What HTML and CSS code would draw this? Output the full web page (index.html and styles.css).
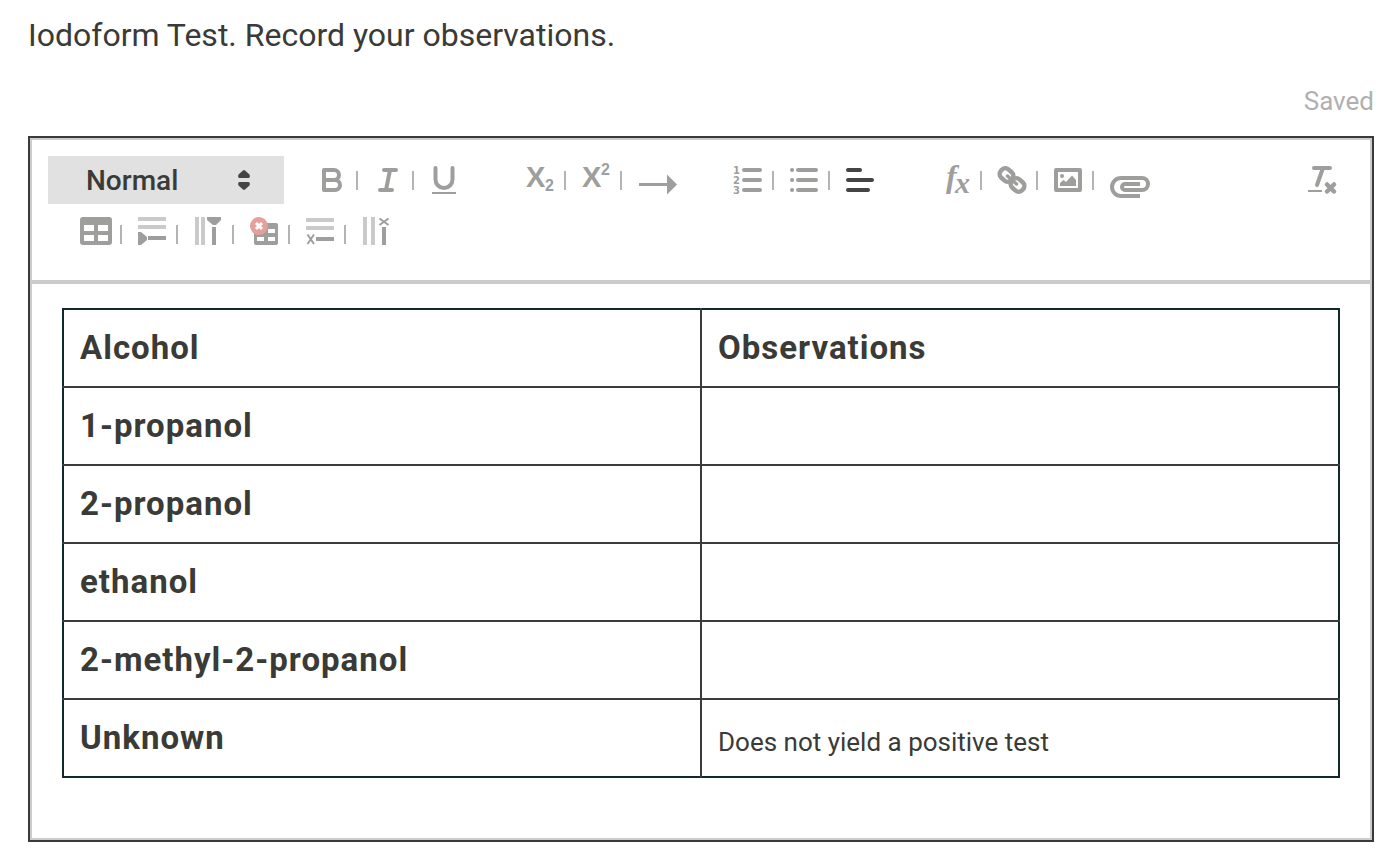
FILE: index.html
```html
<!DOCTYPE html>
<html lang="en">
<head>
    <meta charset="UTF-8">
    <meta name="viewport" content="width=device-width, initial-scale=1.0">
    <title>Iodoform Test</title>
    <link rel="stylesheet" href="styles.css">
</head>
<body>
    <main class="question">
        <p class="prompt">Iodoform Test. Record your observations.</p>
        <p class="status">Saved</p>

        <div class="editor">
            <div class="toolbar">
                <div class="toolbar-row">
                    <div class="format-picker">
                        <select class="format-select" aria-label="Text style">
                            <option selected>Normal</option>
                            <option>Heading 1</option>
                            <option>Heading 2</option>
                        </select>
                        <svg class="picker-arrows" width="12" height="20" viewBox="0 0 12 20"><path d="M5 .4Q6 -.2 7 .4L11.500 4.500Q12.500 8 10.500 8H1.500Q-.500 8 .500 4.500ZM5 19.600Q6 20.200 7 19.600L11.500 15.500Q12.500 12 10.500 12H1.500Q-.500 12 .500 15.500Z"/></svg>
                    </div>
                    <div class="group">
                        <button class="tool" type="button" aria-label="Bold"><svg viewBox="0 0 52 48"><path class="stroke" d="M20 14H30A4.500 4.500 0 0 1 30 24H20ZM20 24H31A5 5 0 0 1 31 34H20Z" stroke-width="4"/></svg></button>
                        <button class="tool" type="button" aria-label="Italic"><svg viewBox="0 0 52 48"><path class="stroke" d="M24 14H36M20 34H32M30 14L26 34" stroke-width="4"/></svg></button>
                        <button class="tool" type="button" aria-label="Underline"><svg viewBox="0 0 52 48"><path class="stroke" d="M19.500 12V23.500A8.500 8.500 0 0 0 36.500 23.500V12" stroke-width="4"/><path d="M16 36H40V38H16Z"/></svg></button>
                    </div>
                    <div class="group">
                        <button class="tool" type="button" aria-label="Subscript"><svg viewBox="0 0 52 48"><text class="script-letter" x="14" y="31">X</text><text class="script-digit" x="33" y="35">2</text></svg></button>
                        <button class="tool" type="button" aria-label="Superscript"><svg viewBox="0 0 52 48"><text class="script-letter" x="14" y="31">X</text><text class="script-digit" x="33" y="19">2</text></svg></button>
                        <button class="tool" type="button" aria-label="Arrow"><svg viewBox="0 0 52 48"><path d="M15 27H43V18.500L53 28.500L43 38.500V30H15Z"/></svg></button>
                    </div>
                    <div class="group">
                        <button class="tool" type="button" aria-label="Numbered list"><svg viewBox="0 0 52 48"><path class="stroke" d="M24 14H40M24 24H40M24 34H40" stroke-width="4"/><g class="list-digit"><text x="13" y="18">1</text><text x="13" y="28">2</text><text x="13" y="38">3</text></g></svg></button>
                        <button class="tool" type="button" aria-label="Bulleted list"><svg viewBox="0 0 52 48"><path class="stroke" d="M22 14H40M22 24H40M22 34H40M16 14H16.100M16 24H16.100M16 34H16.100" stroke-width="4"/></svg></button>
                        <button class="tool active" type="button" aria-label="Align left"><svg viewBox="0 0 52 48"><path class="stroke" d="M16 14H28M16 24H40M16 34H36" stroke-width="4"/></svg></button>
                    </div>
                    <div class="group">
                        <button class="tool" type="button" aria-label="Formula"><svg viewBox="0 0 52 48"><text class="formula" x="18" y="31">f</text><text class="formula formula-x" x="27" y="37">x</text></svg></button>
                        <button class="tool" type="button" aria-label="Link"><svg viewBox="0 0 52 48"><g class="stroke" stroke-width="4.500"><rect x="-7" y="-5.500" width="14" height="11" rx="5" transform="translate(22.500 19) rotate(42)"/><rect x="-7" y="-5.500" width="14" height="11" rx="5" transform="translate(33.500 29) rotate(42)"/><path d="M23.500 20L32.500 28" stroke-width="3.500"/></g></svg></button>
                        <button class="tool" type="button" aria-label="Image"><svg viewBox="0 0 52 48"><path class="stroke" d="M16 14H40V34H16Z" stroke-width="4"/><circle cx="22" cy="20" r="2"/><path d="M20 30V27L23.500 24L26 26L32 19.500L36 24V30Z"/></svg></button>
                        <button class="tool" type="button" aria-label="Attach file"><svg viewBox="0 0 52 48"><path class="clip" d="M44 40H25A9 9 0 0 1 25 22H46A6 6 0 0 1 46 34H29A3 3 0 0 1 29 28H44"/></svg></button>
                    </div>
                    <div class="group group-end">
                        <button class="tool" type="button" aria-label="Clear formatting"><svg viewBox="0 0 52 48"><path class="stroke" d="M18 12H34M27 12L21 29" stroke-width="4"/><path d="M12 34H26V36H12Z"/><path class="stroke" d="M31 28.500L38 35.500M38 28.500L31 35.500" stroke-width="4.500"/></svg></button>
                    </div>
                </div>

                <div class="toolbar-row table-tools">
                    <div class="group">
                        <button class="tool" type="button" aria-label="Insert table"><svg viewBox="0 0 52 48"><rect x="12" y="7" width="32" height="28" rx="3"/><path class="cells" d="M16 15H26V21H16ZM30 15H40V21H30ZM16 25H26V31H16ZM30 25H40V31H30Z"/></svg></button>
                        <button class="tool" type="button" aria-label="Insert row"><svg viewBox="0 0 52 48"><path class="light" d="M14 7H42V11H14ZM14 15H42V19H14Z"/><path d="M14 22H17L23 27V30L17 35H14ZM24 26H42V30H24Z"/></svg></button>
                        <button class="tool" type="button" aria-label="Insert column"><svg viewBox="0 0 52 48"><path class="light" d="M15 7H19V35H15ZM21 7H25V35H21Z"/><path d="M27 7H41V10L36 15H33L27 10ZM32 17H36V35H32Z"/></svg></button>
                        <button class="tool" type="button" aria-label="Delete table"><svg viewBox="0 0 52 48"><rect x="18" y="13" width="24" height="22" rx="2"/><path class="cells" d="M21 19H28V23H21ZM32 19H39V23H32ZM21 27H28V31H21ZM32 27H39V31H32Z"/><circle class="delete-badge" cx="23" cy="16" r="9"/><path class="delete-cross" d="M20 13L26 19M26 13L20 19"/></svg></button>
                        <button class="tool" type="button" aria-label="Delete row"><svg viewBox="0 0 52 48"><path class="light" d="M14 8H42V12H14ZM14 16H42V20H14Z"/><path d="M24 27H42V31H24Z"/><path class="cross" d="M15.500 24.500L22 34M22 24.500L15.500 34"/></svg></button>
                        <button class="tool" type="button" aria-label="Delete column"><svg viewBox="0 0 52 48"><path class="light" d="M15 7H19V35H15ZM23 7H27V35H23Z"/><path d="M34 17H38V35H34Z"/><path class="cross" d="M31.500 8.500L40.500 15M40.500 8.500L31.500 15"/></svg></button>
                    </div>
                </div>
            </div>

            <div class="content" contenteditable="true" spellcheck="false">
                <table class="results">
                    <thead>
                        <tr><th scope="col">Alcohol</th><th scope="col">Observations</th></tr>
                    </thead>
                    <tbody>
                        <tr><th scope="row">1-propanol</th><td></td></tr>
                        <tr><th scope="row">2-propanol</th><td></td></tr>
                        <tr><th scope="row">ethanol</th><td></td></tr>
                        <tr><th scope="row">2-methyl-2-propanol</th><td></td></tr>
                        <tr><th scope="row">Unknown</th><td>Does not yield a positive test</td></tr>
                    </tbody>
                </table>
            </div>
        </div>
    </main>
</body>
</html>
```
FILE: styles.css
```css
* {
    box-sizing: border-box;
}

body {
    margin: 0;
    background-color: #fff;
    color: #3a3a36;
    font-family: Roboto, sans-serif;
}

.question {
    padding: 15px 20px 24px 28px;
}

.prompt {
    margin: 0;
    font-size: 32px;
    line-height: 40px;
}

.status {
    margin: 30px 0 19px;
    font-size: 26px;
    line-height: 32px;
    color: #b0b0b0;
    text-align: right;
}

.editor {
    border: 2px solid #3a3a38;
    box-shadow: inset 0 0 0 2px #ccc;
    padding: 2px;
}

/* Toolbar */

.toolbar {
    display: flex;
    flex-direction: column;
    gap: 6px;
    padding: 16px 18px 22px 16px;
    border-bottom: 4px solid #ccc;
}

.toolbar-row {
    display: flex;
    gap: 40px;
}

.table-tools {
    padding-left: 20px;
}

.format-picker {
    position: relative;
    width: 236px;
    margin-right: -20px;
}

.format-select {
    appearance: none;
    width: 100%;
    height: 48px;
    padding: 0 38px;
    border: none;
    border-radius: 0;
    background-color: #e1e1e1;
    color: #3a3a36;
    font-family: Roboto, sans-serif;
    font-size: 28px;
    font-weight: 500;
}

.picker-arrows {
    position: absolute;
    top: 14px;
    right: 34px;
    fill: #444;
    pointer-events: none;
}

.group {
    display: flex;
}

.group-end {
    margin-left: auto;
}

.tool {
    display: flex;
    width: 56px;
    height: 48px;
    padding: 0;
    border: none;
    background: none;
    color: #9e9e9c;
    cursor: pointer;
}

.tool::after {
    content: "";
    width: 2px;
    height: 19px;
    margin-top: 15px;
    background-color: #b4b4b2;
}

.tool:last-child::after {
    display: none;
}

.tool svg {
    flex: none;
    width: 52px;
    height: 48px;
    overflow: visible;
    fill: currentColor;
}

.tool .stroke,
.tool .clip,
.tool .cross {
    fill: none;
    stroke: currentColor;
    stroke-linecap: round;
    stroke-linejoin: round;
}

.tool .clip {
    stroke-width: 4px;
    stroke-linecap: butt;
}

.tool .cross {
    stroke-width: 2px;
    stroke-linecap: butt;
}

.tool .light {
    fill: #cacaca;
}

.tool .cells {
    fill: #fff;
}

.tool .delete-badge {
    fill: #e5a09b;
}

.tool .delete-cross {
    stroke: #fff;
    stroke-width: 3px;
}

.tool.active {
    color: #444;
}

.script-letter,
.script-digit {
    font-family: "Liberation Sans", sans-serif;
    font-weight: 700;
}

.script-letter {
    font-size: 29px;
}

.script-digit {
    font-size: 16px;
}

.list-digit {
    font-family: "DejaVu Sans", sans-serif;
    font-size: 10px;
    font-weight: 700;
}

.formula {
    font-family: "Liberation Serif", serif;
    font-size: 32px;
    font-style: italic;
    font-weight: 700;
}

.formula-x {
    font-size: 30px;
}

/* Answer area */

.content {
    padding: 24px 30px 60px;
    outline: none;
}

.results {
    width: 100%;
    table-layout: fixed;
    border-collapse: collapse;
    border: 2px solid #12282d;
}

.results th,
.results td {
    height: 78px;
    padding: 0 16px;
    text-align: left;
}

.results th + th,
.results th + td {
    border-left: 2px solid #3c3a3a;
}

.results tbody th,
.results tbody td {
    border-top: 2px solid #3c3a3a;
}

.results th {
    padding-bottom: 2px;
    font-size: 33px;
    font-weight: 700;
    letter-spacing: 1px;
}

.results td {
    padding-top: 8px;
    font-size: 26px;
}
```
